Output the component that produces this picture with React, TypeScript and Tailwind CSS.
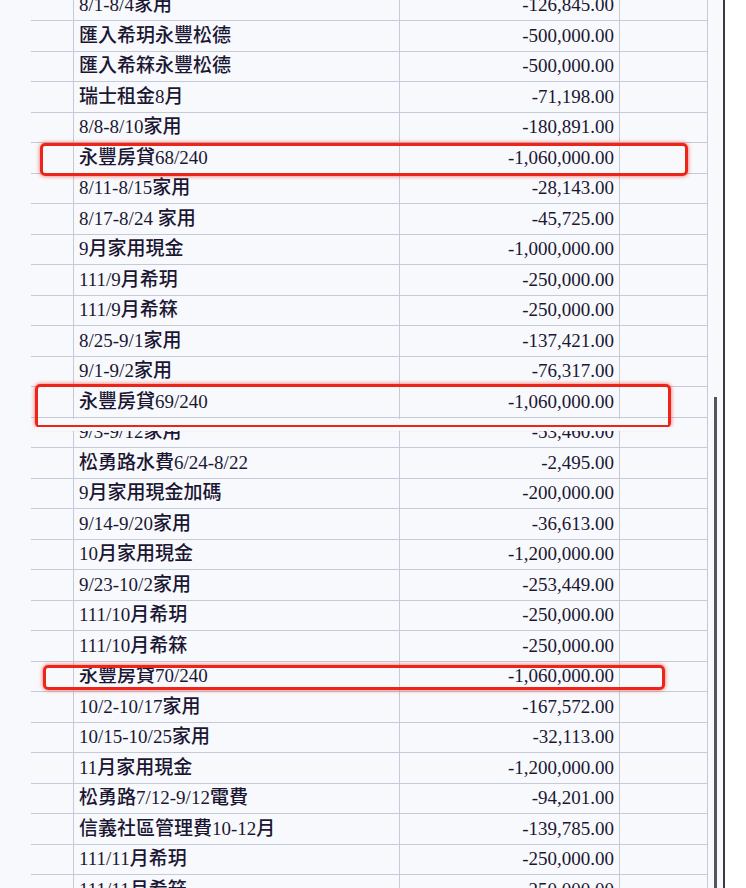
const rows: [string, string][] = [
  ["8/1-8/4家用", "-126,845.00"],
  ["匯入希玥永豐松德", "-500,000.00"],
  ["匯入希箖永豐松德", "-500,000.00"],
  ["瑞士租金8月", "-71,198.00"],
  ["8/8-8/10家用", "-180,891.00"],
  ["永豐房貸68/240", "-1,060,000.00"],
  ["8/11-8/15家用", "-28,143.00"],
  ["8/17-8/24 家用", "-45,725.00"],
  ["9月家用現金", "-1,000,000.00"],
  ["111/9月希玥", "-250,000.00"],
  ["111/9月希箖", "-250,000.00"],
  ["8/25-9/1家用", "-137,421.00"],
  ["9/1-9/2家用", "-76,317.00"],
  ["永豐房貸69/240", "-1,060,000.00"],
  ["9/3-9/12家用", "-53,460.00"],
  ["松勇路水費6/24-8/22", "-2,495.00"],
  ["9月家用現金加碼", "-200,000.00"],
  ["9/14-9/20家用", "-36,613.00"],
  ["10月家用現金", "-1,200,000.00"],
  ["9/23-10/2家用", "-253,449.00"],
  ["111/10月希玥", "-250,000.00"],
  ["111/10月希箖", "-250,000.00"],
  ["永豐房貸70/240", "-1,060,000.00"],
  ["10/2-10/17家用", "-167,572.00"],
  ["10/15-10/25家用", "-32,113.00"],
  ["11月家用現金", "-1,200,000.00"],
  ["松勇路7/12-9/12電費", "-94,201.00"],
  ["信義社區管理費10-12月", "-139,785.00"],
  ["111/11月希玥", "-250,000.00"],
  ["111/11月希箖", "-250,000.00"],
]

export default function App() {
  return (
    <div
      className="relative flex h-[888px] w-[746px] overflow-hidden bg-[#f8f9fc] text-[19px] font-medium text-[#1b1733]"
      style={{ fontFamily: '"Liberation Serif", "Noto Sans CJK TC", serif' }}
    >
      <div className="w-[31px] shrink-0" />
      <div className="-mt-[9.5px] w-[677px] shrink-0 border-r border-[#c6c9d8]">
        {rows.map(([label, amount], i) => (
          <div key={i} className="flex h-[30.5px] items-center border-b border-[#c6c9d8]">
            <div className="h-full w-[43px] shrink-0 border-r border-[#c6c9d8]" />
            <div className="flex h-full w-[326px] shrink-0 items-center border-r border-[#c6c9d8] pl-[5px] whitespace-nowrap">
              {label}
            </div>
            <div className="flex h-full w-[220px] shrink-0 items-center justify-end border-r border-[#c6c9d8] pr-[5px] whitespace-nowrap">
              {amount}
            </div>
            <div className="h-full flex-1" />
          </div>
        ))}
      </div>
      <div className="flex w-[15px] shrink-0 flex-col items-center pt-[397px]">
        <div className="w-[3px] flex-1 bg-[#55555c]" />
      </div>
      <div className="w-[2px] shrink-0 bg-[#3a3a42]" />
      <div className="flex-1 bg-white" />

      {/* hand-drawn highlight boxes */}
      <div className="absolute left-[40px] top-[143px] h-[33px] w-[648px] rounded-[5px] border-[3px] border-[#ee2418] shadow-[0_0_4px_rgba(238,36,24,0.7)]" />
      <div className="absolute left-[35px] top-[384px] flex h-[44px] w-[636px] flex-col rounded-[5px] border-[3px] border-[#ee2418] shadow-[0_0_4px_rgba(238,36,24,0.7)]">
        <div className="flex-1" />
        <div className="h-[6px] bg-[#f8f9fc]" />
      </div>
      <div className="absolute left-[35px] top-[427px] h-[4px] w-[640px] bg-[#f8f9fc]" />
      <div className="absolute left-[43px] top-[665px] h-[25px] w-[622px] rounded-[5px] border-[3px] border-[#ee2418] shadow-[0_0_4px_rgba(238,36,24,0.7)]" />
    </div>
  )
}
